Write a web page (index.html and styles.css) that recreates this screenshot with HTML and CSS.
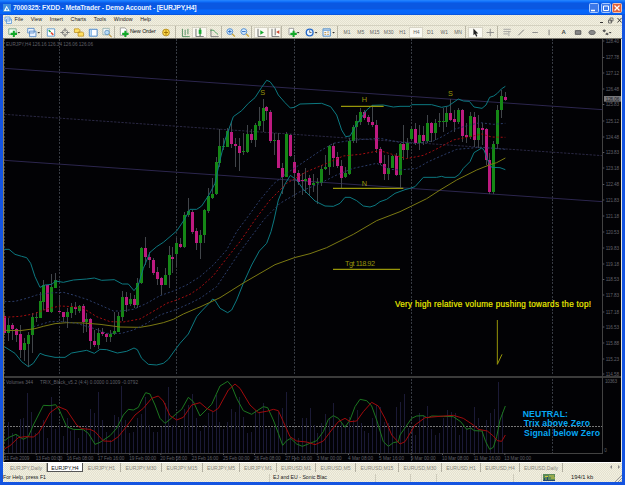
FILE: index.html
```html
<!DOCTYPE html>
<html lang="en">
<head>
<meta charset="utf-8">
<title>MetaTrader</title>
<link rel="stylesheet" href="styles.css">
</head>
<body>
<div class="window">
  <header class="title">
    <svg class="logo" viewBox="0 0 9 9"><rect width="9" height="9" fill="#3f8fe0"/><path d="M1 8L4 2l3.500 6z" fill="#fff"/><path d="M3 7l1.300-3L6 7z" fill="#4aa0e8"/></svg>
    <span class="caption">7000325: FXDD - MetaTrader - Demo Account - [EURJPY,H4]</span>
    <span class="winbtns">
      <svg viewBox="0 0 10 10"><rect x=".5" y=".5" width="9" height="9" rx="1" fill="#3c78e8" stroke="#a8c8ff"/><path d="M2 7.500h4" stroke="#fff" stroke-width="1.500"/></svg>
      <svg viewBox="0 0 10 10"><rect x=".5" y=".5" width="9" height="9" rx="1" fill="#3c78e8" stroke="#a8c8ff"/><path d="M2.500 3h5v4.500h-5z" stroke="#fff" fill="none"/></svg>
      <svg viewBox="0 0 10 10"><rect x=".5" y=".5" width="9" height="9" rx="1" fill="#e0603a" stroke="#f4c0a8"/><path d="M2.500 2.500l5 5m0-5l-5 5" stroke="#fff" stroke-width="1.300"/></svg>
    </span>
  </header>
  <div class="bars">
    <nav class="menu">
      <svg class="doc" viewBox="0 0 8 8"><path d="M1 1h5v4H1zM2.500 3h5v4.500h-5z" fill="#e8f2ff" stroke="#5a98d8" stroke-width=".8"/></svg>
      <span>File</span><span>View</span><span>Insert</span><span>Charts</span><span>Tools</span><span>Window</span><span>Help</span>
      <svg class="mdi" viewBox="0 0 24 9"><path d="M2 6.500h3" stroke="#333" /><path d="M12 2h3v3h-3zM10.500 4h3v3h-3z" fill="none" stroke="#555" stroke-width=".8"/><path d="M19.500 2l4 4.500m0-4.500l-4 4.500" stroke="#333" stroke-width=".9"/></svg>
    </nav>
    <div class="tools">
      <div class="group g-new">
        <svg viewBox="0 0 17 12"><path d="M2 2h8v6H2z" fill="#f4fff4" stroke="#5a9070" stroke-width=".8"/><path d="M7.500 4v7M4 7.500h7" stroke="#12a828" stroke-width="2.200"/><path d="M11.500 5.500h3L13 7.200z" fill="#333"/></svg>
        <svg viewBox="0 0 17 12"><path d="M3 1.500h7v5H3zM5 4.500h7v6H5z" fill="#eaf3ff" stroke="#4f86c6" stroke-width=".9"/><path d="M13.500 5.500h3L15 7.200z" fill="#333"/></svg>
      </div>
      <div class="group g-panels">
        <svg viewBox="0 0 14 12"><path d="M3 2h8v8H3z" fill="#fff" stroke="#5e9ad0"/><path d="M4.500 3.500l2 2" stroke="#13a040" stroke-width="1.600"/><path d="M7 6l2.500 2.500" stroke="#e04830" stroke-width="1.800"/></svg>
        <svg viewBox="0 0 14 12"><circle cx="7" cy="6" r="3" fill="none" stroke="#777" stroke-width=".9"/><path d="M7 1v4M7 7v4M2 6h4M8 6h4" stroke="#777"/></svg>
        <svg viewBox="0 0 14 12"><path d="M2 2h5l1 1v3H2zM6 5.500h5l1 1V10H6z" fill="#ffdf60" stroke="#b88c20" stroke-width=".8"/></svg>
        <svg viewBox="0 0 14 12"><path d="M3 2.500h8.500v7.500H3z" fill="#fff" stroke="#3f80c8"/><path d="M5 3v7" stroke="#7db4e8" stroke-width="1.500"/></svg>
        <svg viewBox="0 0 14 12"><path d="M2.500 1.500h7v7h-7z" fill="#f0f4f4" stroke="#8aa" stroke-width=".8"/><circle cx="7" cy="6" r="2.500" fill="#b8dcf8" stroke="#5088b8" stroke-width=".8"/><path d="M9 8l3 3" stroke="#c09840" stroke-width="1.300"/></svg>
      </div>
      <div class="group g-order">
        <svg viewBox="0 0 14 12"><path d="M3 1h5l2 2v6H3z" fill="#fff" stroke="#888" stroke-width=".8"/><path d="M8.500 4v7M5 7.500h7" stroke="#12a828" stroke-width="2.200"/></svg>
        <span>New Order</span>
        <svg viewBox="0 0 14 12"><circle cx="7" cy="6" r="3.700" fill="#ffd94a" stroke="#b08a20"/><path d="M7 3.500v5M4.700 6h4.600" stroke="#a07000"/></svg>
      </div>
      <div class="group g-kind">
        <svg viewBox="0 0 14 12"><path d="M4 2v8.500h8M7 3v6M10 2v6" stroke="#4a8a5a" fill="none"/></svg>
        <svg class="on" viewBox="0 0 14 12"><path d="M3.500 2v8.500H12" stroke="#666" fill="none"/><path d="M8 1v9" stroke="#186018"/><path d="M6.500 3h3v4.500h-3z" fill="#18a830"/></svg>
        <svg viewBox="0 0 14 12"><path d="M3.500 2v8.500H12" stroke="#777" fill="none"/><path d="M3 4c4-2 5 2 8 4" stroke="#3a9a50" fill="none"/></svg>
      </div>
      <div class="group g-zoom">
        <svg viewBox="0 0 14 12"><circle cx="6" cy="5" r="3.200" fill="#d8ecff" stroke="#4888d0"/><path d="M4 5h4M6 3v4" stroke="#2468c0"/><path d="M8.500 7.500l3 3" stroke="#c8a030" stroke-width="1.500"/></svg>
        <svg viewBox="0 0 14 12"><circle cx="6" cy="5" r="3.200" fill="#d8ecff" stroke="#4888d0"/><path d="M4 5h4" stroke="#2468c0"/><path d="M8.500 7.500l3 3" stroke="#c8a030" stroke-width="1.500"/></svg>
      </div>
      <div class="group g-scroll">
        <svg class="on" viewBox="0 0 14 12"><path d="M4 2v8.500h8" stroke="#666" fill="none"/><path d="M6.500 3.500l4 2.500-4 2.500z" fill="#18a830"/></svg>
        <svg class="on" viewBox="0 0 14 12"><path d="M4 2v8.500h8M7.500 1.500V9" stroke="#666" fill="none"/><path d="M12 3.500v4L8.500 5.500z" fill="#d04830"/></svg>
      </div>
      <div class="group g-ind">
        <svg viewBox="0 0 17 12"><path d="M2.500 1.500h5v7h-5z" fill="#fff" stroke="#888" stroke-width=".8"/><path d="M7.500 4v7M4 7.500h7" stroke="#12a828" stroke-width="2.200"/><path d="M11 5.500h3l-1.500 1.700z" fill="#333"/></svg>
        <svg viewBox="0 0 17 12"><circle cx="6.500" cy="6" r="3.700" fill="#e8f4ff" stroke="#2468c8" stroke-width="1.500"/><path d="M6.500 3.500V6h2" stroke="#444" stroke-width=".8" fill="none"/><path d="M12 5.500h3l-1.500 1.700z" fill="#333"/></svg>
        <svg viewBox="0 0 17 12"><path d="M2.500 2h8v8h-8z" fill="#f4faff" stroke="#4888c8"/><path d="M3 3.500h7" stroke="#4888c8"/><path d="M4 6h2M7 5.500h2M4 8h2M7 8h2" stroke="#c09040"/><path d="M12.500 5.500h3L14 7.200z" fill="#333"/></svg>
      </div>
      <div class="group g-time"><span>M1</span><span>M5</span><span>M15</span><span>M30</span><span>H1</span><span class="on">H4</span><span>D1</span><span>W1</span><span>MN</span></div>
      <div class="group g-cursor">
        <svg class="on" viewBox="0 0 14 12"><path d="M5 1.500V9l1.700-1.500L8 10.500l1.300-.6L8 7h2.300z" fill="#222"/></svg>
        <svg viewBox="0 0 14 12"><path d="M7 2v8M3 6h8" stroke="#888"/></svg>
      </div>
      <div class="group g-draw">
        <svg viewBox="0 0 14 12"><path d="M3 2.500h8M3 5h8M3 7.500h5M9 5v5" stroke="#999" stroke-width=".9"/></svg>
        <svg viewBox="0 0 14 12"><path d="M4 9l6-6" stroke="#777"/></svg>
        <svg viewBox="0 0 14 12"><path d="M4 6h6" stroke="#888"/></svg>
        <svg viewBox="0 0 14 12"><path d="M7 3v6" stroke="#777"/></svg>
        <span>A</span>
        <svg viewBox="0 0 14 12"><path d="M4 4h6v4H4z" fill="#888" stroke="#555"/></svg>
        <svg viewBox="0 0 14 12"><ellipse cx="7" cy="6" rx="3.500" ry="2.300" fill="#888" stroke="#666"/></svg>
        <svg viewBox="0 0 14 12"><path d="M3 4l2-1.500L7 4 5 6zM6 8l2-2 2 1.500L8.500 9z" fill="#555"/><path d="M10 5.500h3l-1.500 1.700z" fill="#333"/></svg>
      </div>
    </div>
  </div>
  <main class="chart">
    <svg viewBox="9 117 1857 1269">
      <g class="grid">
        <path d="M13 117V1386M178 117V1386M529 117V1386M883 117V1386M1234 117V1386M1657 117V1360"/>
        <path class="level" d="M13 1279H1808"/>
      </g>
      <g class="channel">
        <path d="M13 205L1808 329M13 481L1808 605"/>
        <path class="mid" d="M13 343L1808 467"/>
      </g>
      <g id="volumes" class="volumes"></g>
      <g id="candles" class="candles"></g>
      <g class="curves" id="curves"></g>
      <g class="frame">
        <path class="thick" d="M13 1131H1866"/>
        <path d="M1808 117V1360M13 1360H1808"/>
      </g>
      <g class="marks">
        <path d="M1023 319h128M999 565h211M999 808h201" class="bar"/>
        <path d="M1492 960v133l14-30" class="arrow"/>
        <text x="781" y="284">S</text><text x="1085" y="307">H</text><text x="1085" y="559">N</text><text x="1344" y="289">S</text>
        <text x="1035" y="798" textLength="90">Tgt 118.92</text>
        <text class="loud" x="1185" y="922" textLength="588">Very high relative volume pushing towards the top!</text>
      </g>
      <g class="signal">
        <text x="1568" y="1250" textLength="136">NEUTRAL:</text>
        <text x="1571" y="1279" textLength="199">Trix above Zero</text>
        <text x="1572" y="1309" textLength="228">Signal below Zero</text>
      </g>
      <g class="axis" id="axis">
        <text x="18" y="137" textLength="261">EURJPY,H4  126.16 126.34 126.06 126.06</text>
        <text x="18" y="1151" textLength="81">Volumes 344</text>
        <text x="120" y="1151" textLength="294">TRIX_Black_v5.2 (4:4) 0.0000 0.1009 -0.0792</text>
        <text x="1815" y="1148" textLength="36">10363</text>
        <text x="1813" y="1356">0</text>
      </g>
      <rect class="pricebox" x="1812" y="288" width="51" height="17"/>
      <text class="price" x="1817" y="302" textLength="41">126.06</text>
    </svg>
  </main>
  <div class="tabs">
    <span>EURJPY,Daily</span><span class="current">EURJPY,H4</span><span>EURJPY,H1</span><span>EURJPY,M30</span><span>EURJPY,M15</span><span>EURJPY,M5</span><span>EURJPY,M1</span><span>EURUSD,M1</span><span>EURUSD,M5</span><span>EURUSD,M15</span><span>EURUSD,M30</span><span>EURUSD,H1</span><span>EURUSD,H4</span><span>EURUSD,Daily</span>
    <svg viewBox="0 0 14 8"><path d="M4 2L2 4l2 2zM10 2l2 2-2 2z" fill="#888"/></svg>
  </div>
  <footer class="status">
    <span class="help">For Help, press F1</span>
    <span class="profile">EJ and EU - Sonic Blac</span>
    <span></span><span></span><span></span><span></span>
    <span class="link"><svg viewBox="0 0 12 7"><rect width="12" height="7" fill="#5b8a58"/><path d="M0 6.500h12M1.500 4v3M4.500 3v4" stroke="#284870"/><path d="M6 2h5M8 4h4M2 2.500h3" stroke="#d4c840"/></svg></span>
    <span class="rate">194/1 kb</span>
    <svg class="grip" viewBox="0 0 8 8"><path d="M1 8l7-7M4 8l4-4M6.500 8L8 6.500" stroke="#999"/></svg>
  </footer>
</div>
<script src="chart.js"></script>
</body>
</html>
```
FILE: styles.css
```css
* { box-sizing: border-box; }
body { margin: 0; width: 625px; height: 485px; overflow: hidden; font: 5.4px/1 "Liberation Sans", Arial, sans-serif; color: #333; }
svg { display: block; }
.window {
  width: 625px; height: 485px; display: grid;
  grid-template-rows: 15px 24px 423px 12px 8px 3px;
  grid-template-columns: 619px;
  padding: 0 3px; background: #1454e0;
}
.title {
  margin: 0 -3px; padding: 1px 3px 0 7px; display: flex; align-items: center;
  background: linear-gradient(#2888ff 0, #0c6cfa 2px, #0a58e2 3px, #0a58e2 9px, #0668fc 10px, #0664f8 14px, #0a48c8 15px);
}
.logo { width: 8px; height: 8px; margin: 0 -1px 0 -4px; }
.caption { padding-left: 3px; font-size: 6.8px; font-weight: bold; color: #e8f2ff; white-space: pre; letter-spacing: -.17px; }
.winbtns { margin-left: auto; display: flex; gap: 1.5px; }
.winbtns svg { width: 10px; height: 10px; }
.bars, .tabs, .status { background: repeating-conic-gradient(#f2f0e0 0 25%, #e4e1d0 0 50%) 0 0 / 2px 2px; }
.bars { display: grid; grid-template-rows: 10px 14px; border-bottom: 1px solid #77756c; }
.menu { display: flex; align-items: center; gap: 7.6px; padding-left: 1px; font-size: 5.3px; color: #222; }
.menu .doc { width: 8px; height: 8px; margin-right: -5px; }
.menu .mdi { width: 24px; height: 9px; margin-left: auto; }
.tools { display: flex; border-top: 1px solid #d4d1c0; padding-left: 3px; }
.group { display: flex; align-items: center; height: 12px; border-right: 1px solid #bab7a6; margin-right: 2px; }
.group > svg { height: 11px; flex: 1 1 0; min-width: 0; }
.group > .on { background: #faf9f2; outline: 1px solid #d8d5c6; outline-offset: -1px; }
.g-new { width: 36px; }
.g-panels { width: 71px; }
.g-order { width: 59px; font-size: 5.5px; color: #111; letter-spacing: -.1px; }
.g-order > svg { flex: 0 0 14px; }
.g-order span { width: 28px; margin-left: -1px; margin-right: 1px; white-space: nowrap; }
.g-kind { width: 44px; }
.g-zoom { width: 28px; }
.g-scroll { width: 28px; }
.g-ind { width: 52px; margin-left: 2px; }
.g-time { width: 126px; color: #666; }
.g-time span { flex: 1 1 0; height: 11px; line-height: 11px; text-align: center; font-size: 5px; }
.g-cursor { width: 30px; }
.g-draw { width: 113px; border: 0; color: #444; }
.g-draw span { flex: 1 1 0; text-align: center; font-size: 6px; font-weight: bold; }
.chart { background: #020205; border-left: 1px solid #8f8158; border-right: 1px solid #e8e6dc; }
.chart svg { width: 619px; height: 423px; margin: 0 -1px; clip-path: inset(0 1px 0 1px); }
.grid path { stroke: #363a42; stroke-width: 3; stroke-dasharray: 6 4; fill: none; shape-rendering: crispEdges; }
.grid .level { stroke: #777; stroke-dasharray: 6 3; }
.channel path { stroke: #2c264e; stroke-width: 3; }
.channel .mid { stroke: #292742; stroke-dasharray: 7 4; }
.volumes path { stroke: #1b1a36; stroke-width: 3; shape-rendering: crispEdges; }
.candles path { fill: none; shape-rendering: crispEdges; }
.wick { stroke: #41454a; stroke-width: 3; }
.up { stroke: #158716; stroke-width: 8; }
.down { stroke: #bd1a80; stroke-width: 8; }
.curves path { fill: none; stroke-width: 3; stroke-linejoin: round; }
.curves .band { stroke: #0c7880; }
.curves .slow { stroke: #7b7912; }
.curves .edge { stroke: #2b3c68; stroke-dasharray: 6 6; }
.curves .center { stroke: #a50d10; stroke-dasharray: 6 6; }
.curves .trix { stroke: #1c7620; }
.curves .sig { stroke: #a00a0c; }
.frame path { stroke: #424242; stroke-width: 3; fill: none; shape-rendering: crispEdges; }
.frame .thick { stroke-width: 6; stroke: #3b3b3b; }
.marks { fill: #98960a; font-size: 22px; }
.marks .bar { stroke: #98960a; stroke-width: 4; }
.marks .arrow { stroke: #98960a; stroke-width: 3; fill: none; }
.marks .loud { fill: #f0f000; font-size: 24.500px; stroke: #f0f000; stroke-width: .5; }
.signal { fill: #06a8f4; font-size: 26px; font-weight: bold; }
.axis { fill: #606068; font-size: 14px; }
.axis path { stroke: #55555c; stroke-width: 3; }
.pricebox { fill: #77777a; }
.price { fill: #16161a; font-size: 14px; }
.tabs {
  display: grid; align-items: stretch; border-top: 1px solid #fff; color: #88867c; font-size: 5.1px;
  grid-template-columns: 41px 36px 38px 41px 41px 37px 37px 39px 40px 43px 43px 39px 39px 43px 1fr;
  padding-left: 3px;
}
.tabs span { text-align: center; border-right: 1px solid #b3b0a2; white-space: nowrap; height: 9px; line-height: 10px; }
.tabs .current { background: #fff; color: #111; border: 1px solid #555; border-top: 0; }
.tabs svg { width: 14px; height: 8px; justify-self: end; }
.status { display: grid; grid-template-columns: 267px 106px 35px 26px 77px 28px 23px 1fr 8px; line-height: 7px; font-size: 5.2px; color: #222; white-space: nowrap; }
.status > span { border-right: 1px solid #cfccbc; }
.status .profile { padding-left: 3px; }
.status .link svg { width: 12px; height: 7px; margin-left: 1px; }
.status .link { border: 0; }
.status .rate { padding-left: 6px; border: 0; font-size: 5.8px; }
.status .grip { width: 8px; height: 8px; }
```
FILE: chart.js
```js
// Coordinates are in thirds of a pixel. Each series is a list of
// blocks: [x offset, y offset, points].
const NS = 'http://www.w3.org/2000/svg';
function add(parent, name, attrs, text) {
  const el = document.createElementNS(NS, name);
  for (const key in attrs) el.setAttribute(key, attrs[key]);
  if (text) el.textContent = text;
  document.getElementById(parent).appendChild(el);
}
const snap = v => Math.floor(v / 3) * 3 + 1.5;

// x, high, body top, body bottom, low, direction
const candles = [
  [0, 645, `13 290 303 355 360 d,25 310 330 355 378 u,37 325 330 343 375 d,49 338 343 360 380 d,61 330 357 405 430 d,73 370 383 404 437 u,85 350 360 386 455 u,97 295 306 360 415 u,109 290 306 309 320 u,120 230 258 308 310 u,131 195 209 262 285 u,143 210 210 291 292 d,155 178 215 291 295 u,167 175 195 219 220 u,178 240 287 290 292 d,190 290 291 305 320 d,202 280 290 306 340 u,214 265 277 294 310 u,226 262 276 283 300 d,238 270 273 287 295 u,249 268 273 322 353 d,260 295 311 322 350 u,272 308 311 378 403 d,284 345 378 390 397 d,296 340 353 390 402 u,308 340 352 357 362 d,320 355 358 367 380 d,332 345 356 366 380 u,343 290 348 357 360 u,355 290 304 350 352 u,367 228 247 305 318 u,378 232 247 270 290 d,390 235 253 267 272 u,402 240 252 269 280 d,413 190 203 269 280 u,425 97 99 205 208 u,437 65 100 127 150 d,449 110 127 135 160 d,460 130 135 173 180 d,472 155 172 191 210 d,484 185 190 209 240 d,495 160 180 209 210 u,507 92 121 180 218 u,518 95 125 131 175 d,530 70 85 116 155 u,542 68 86 96 100 d,553 -10 0 95 100 u,565 -50 -12 0 5 u,577 -15 -8 50 58 d,589 40 48 84 105 d,601 45 60 84 133 u,613 -17 -15 60 83 u`],
  [600, 180, `24 385 408 453 460 u,36 355 402 413 418 u,48 290 306 402 405 u,59 208 257 309 320 u,71 235 257 260 270 u,83 205 213 260 262 u,95 185 215 252 265 d,107 235 253 257 322 d,119 235 259 278 332 d,130 220 273 277 285 u,142 195 222 275 280 u,154 208 222 241 250 d,166 190 195 241 262 u,178 140 183 197 210 u,189 118 143 182 215 u,200 138 142 154 180 d,212 150 157 243 248 d,224 220 240 243 285 u,236 220 239 323 325 d,248 310 323 350 403 d,260 217 223 350 352 u,271 222 226 288 290 d,283 285 305 339 415 d,295 330 338 366 375 d,306 340 360 363 405 d,317 325 356 362 400 u,329 345 355 374 408 d,341 343 370 374 395 u,353 355 365 370 432 u,365 315 326 368 377 u,377 285 320 326 330 u,389 255 258 322 345 u,400 248 258 293 320 d,412 275 290 318 325 d,424 300 318 354 383 d,435 320 340 352 355 u,447 235 243 341 345 u,459 195 200 243 250 u,470 165 183 202 250 u,482 145 155 186 195 u,493 150 155 174 180 d,505 165 172 187 195 d,517 135 186 195 200 d,529 180 195 268 280 d,541 262 266 309 315 d,553 285 312 342 360 d,564 285 323 342 360 u,576 285 289 325 325 u,588 280 289 346 348 d,600 248 251 346 385 u`],
  [1200, 180, `10 195 252 270 300 d,22 235 250 270 295 u,35 197 207 238 240 u,46 190 207 249 255 d,58 195 225 249 270 u,70 198 225 243 255 d,82 165 188 243 250 u,94 185 190 220 245 d,105 178 188 219 240 u,117 160 182 185 200 u,129 145 182 185 215 u,140 140 158 185 200 u,152 118 158 180 182 d,164 150 178 185 215 d,176 143 150 186 192 u,187 147 150 229 245 d,199 190 225 230 250 d,211 155 167 232 238 u,223 155 171 240 262 d,235 165 203 240 265 u,246 190 203 209 255 d,258 205 207 300 315 d,269 280 300 395 403 d,281 243 251 396 402 u,292 135 150 252 268 u,304 90 107 150 175 u,316 97 111 119 122 d`]
];
for (const [ox, oy, list] of candles) {
  for (const row of list.split(',')) {
    const [x, high, top, bottom, low, dir] = row.split(' ');
    const cx = snap(ox + +x);
    add('candles', 'path', { class: 'wick', d: `M${cx} ${oy + +high}V${oy + +low}` });
    add('candles', 'path', { class: dir === 'u' ? 'up' : 'down', d: `M${cx} ${oy + +top}V${oy + +bottom}` });
  }
}

// Tops of the volume bars, one every 11.76 units
const volumes = [250,155,190,195,147,143,70,125,190,185,150,205,80,178,165,198,143,183,180,205,180,165,117,130,66,150,185,210,135,140,48,150,190,185,143,132,80,165,185,185,170,100,50,165,130,178,118,105,72,143,183,165,130,125,75,155,178,155,117,125,80,142,190,185,120,130,100,178,175,170,125,115,66,200,180,205,145,143,113,165,190,160,133,145,100,170,160,165,140,150,120,160,183,190,145,105,110,155,160,170,110,97,72,175,170,195,130,135,107,178,195,190,145,120,125,130,195,170,175,170,110,145,180,150,130,117,37,125];
volumes.forEach((top, i) => add('volumes', 'path', { d: `M${snap(13 + i * 11.76)} ${1110 + top}V1359` }));

const curves = {
  'band a': [[0,645,'13,103 27,103 45,118 65,124 80,128 92,145 105,185 120,217 135,210 155,208 167,198 190,202 220,195 260,192 283,189 305,196 343,194 367,207 385,207 402,227 415,210 430,160 450,112 470,95 490,82 510,65 530,48 553,14'],[0,180,'570,448 590,448 605,438'],[600,180,'28,403 45,370 60,300 75,240 100,170 125,152 145,130 165,113 185,82 200,61 210,65 225,85 235,105 255,128 271,144 283,142 300,132 365,130 392,140 410,165 425,210 437,230 450,228 470,193 500,150 517,136 550,135 580,141'],[1200,180,'0,139 30,139 35,134 95,134 125,142 145,138 175,117 190,123 208,124 222,141 246,145 258,135 269,112 281,108 292,100 304,87 316,79']],
  'band b': [[0,645,'13,395 45,415 65,440 85,455 100,445 120,415 135,421 165,427 195,427 215,414 260,406 283,415 300,403 320,404 352,414 380,409 402,399 412,404 425,430 445,448 470,450 490,445 505,433 525,405 540,385 565,357 590,305 605,288'],[600,645,'30,262 38,252 45,256 60,280 83,293 95,285 110,255 130,205 155,150 178,108 200,85 213,50'],[600,180,'222,480 235,420 255,372 271,346 290,360 310,388 345,423 375,438 400,439 420,430 435,412 450,412 470,422 490,438 510,441 525,436 540,425 560,418 585,400'],[1200,180,'15,389 30,385 45,380 70,352 110,352 125,349 135,352 165,352 178,343 190,325 210,305 222,278 245,264 252,270 265,305 275,322 300,323 316,329']],
  'slow': [[0,645,'13,346 60,347 105,341 130,334 165,326 200,323 250,324 300,328 360,336 420,337 450,332 490,323 520,313 550,297 590,280'],[600,645,'0,276 60,248 130,204 225,149 283,128 330,116 380,98 460,58 530,17'],[1200,180,'0,455 35,438 80,416 120,390 170,360 230,330 270,314 290,308 316,294']],
  'edge a': [[0,645,'13,260 45,259 80,250 110,240 150,234 190,232 220,240 260,253 300,270 340,288 365,288 400,283 440,265 480,242 520,228 560,210'],[600,645,'0,185 40,150 80,105 110,50'],[600,180,'140,475 180,420 220,372 260,340 320,300 360,273 400,250 440,243 490,238 540,235'],[1200,180,'0,247 50,250 100,243 130,228 165,207 210,195 240,188 280,193 316,190']],
  'center': [[0,645,'13,307 60,304 100,297 140,282 180,273 220,275 250,280 290,305 330,320 370,321 420,312 470,283 500,265 530,255 570,238'],[600,645,'0,218 40,182 80,130 120,80'],[600,180,'168,475 210,420 260,370 320,335 380,310 430,288 480,283 540,272 580,284'],[1200,180,'20,296 70,286 100,272 160,240 210,230 245,222 275,231 316,232']],
  'edge b': [[0,645,'100,335 150,320 190,320 230,325 280,340 320,355 365,355 400,345 440,325 480,300 530,283 570,265'],[600,645,'0,250 50,215 120,110'],[600,180,'195,475 240,430 300,395 360,370 410,345 460,325 530,310 570,328'],[1200,180,'0,330 50,325 85,305 130,285 170,268 240,262 316,268']],
  'trix': [[0,1110,'13,213 25,203 48,193 70,208 85,200 100,165 130,106 150,107 167,104 178,120 200,170 220,178 250,179 265,190 285,223 300,217 330,197 350,175 370,135 385,118 400,120 415,112 425,90 437,68 450,72 465,105 480,145 495,160 510,148 530,130 545,118 565,82 580,95'],[600,1110,'0,138 35,103 60,48 83,34 95,48 110,85 130,122 155,133 170,123 190,110 203,113 220,150 235,190 248,226 260,212 272,205 290,222 307,229 350,212 370,185 385,148 400,137 415,145 435,172 450,150 465,110 480,88 500,92 515,108 530,150 550,215 565,229 580,218'],[1200,1110,'-5,215 0,195 35,145 50,138 70,137 82,144 95,138 130,139 160,140 182,155 200,178 212,174 223,182 246,183 257,215 269,238 280,232 290,200 300,150 316,108']],
  'sig': [[0,1110,'13,237 30,227 55,203 75,200 100,201 115,190 130,165 150,128 175,110 200,120 230,165 245,176 270,178 285,185 310,213 335,214 355,200 375,175 405,135 430,115 455,85 475,78 490,93 510,137 530,150 550,142 575,105'],[600,1110,'0,98 20,115 40,125 55,115 85,60 105,42 120,55 150,105 175,128 200,124 220,118 235,122 250,155 270,200 290,213 320,216 345,224 370,213 395,180 415,155 435,145 450,155 470,153 490,125 515,97 535,108 555,145 575,195'],[1200,1110,'0,222 15,215 45,165 75,143 120,139 160,136 190,145 220,165 235,178 262,183 280,198 292,212 305,214 316,195']]
};
for (const [name, blocks] of Object.entries(curves)) {
  const points = blocks.flatMap(([ox, oy, list]) => list.split(' ').map(p => {
    const [x, y] = p.split(',');
    return `${ox + +x} ${oy + +y}`;
  }));
  add('curves', 'path', { class: name, d: 'M' + points.join('L') });
}

const prices = ['128.40 41','127.78 57.500','127.12 73','126.48 89','125.83 104.500','125.12 121','124.48 137','123.83 152.500','123.18 168','122.48 184.500','121.83 200','121.18 216','120.53 232','119.83 248','119.18 264','118.53 279.500','117.83 295','117.18 312','116.53 327','115.88 343','115.23 359','114.58 374'];
for (const row of prices) {
  const [label, y] = row.split(' ');
  add('axis', 'path', { d: `M1808 ${y * 3}h5` });
  add('axis', 'text', { x: 1817, y: y * 3 + 5, textLength: 40 }, label);
}
const dates = [[13,'11 Feb 2009'],[107,'13 Feb 00:00'],[200,'16 Feb 08:00'],[293,'17 Feb 16:00'],[388,'19 Feb 00:00'],[481,'20 Feb 08:00'],[575,'23 Feb 16:00'],[669,'25 Feb 00:00'],[762,'26 Feb 08:00'],[856,'27 Feb 16:00'],[950,'3 Mar 00:00'],[1044,'4 Mar 08:00'],[1137,'5 Mar 16:00'],[1232,'9 Mar 00:00'],[1326,'10 Mar 08:00'],[1421,'11 Mar 16:00'],[1513,'13 Mar 00:00']];
for (const [x, label] of dates) {
  add('axis', 'text', { x, y: 1380, textLength: label.length === 12 ? 80 : 75 }, label);
  add('axis', 'path', { d: `M${x + 1.5} 1360v5` });
}
```
